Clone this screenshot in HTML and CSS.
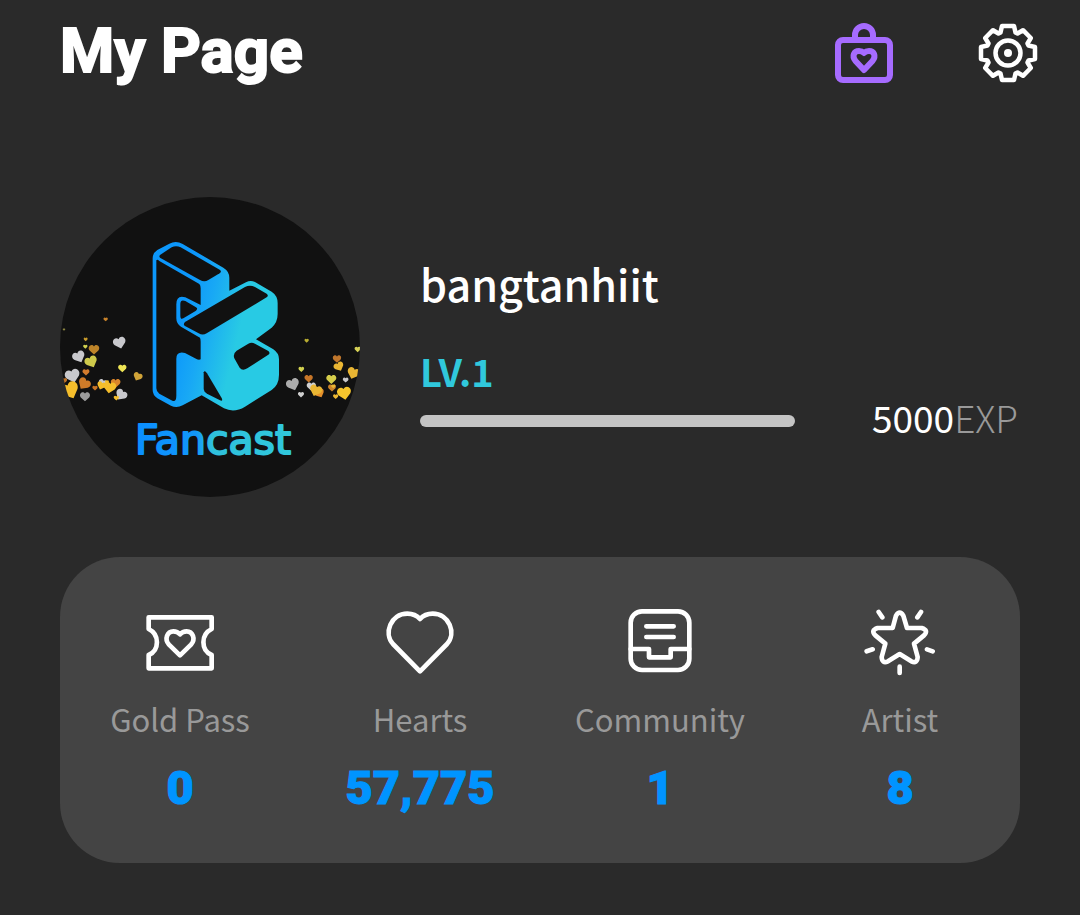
FILE: index.html
```html
<!DOCTYPE html>
<html lang="en">
<head>
<meta charset="utf-8">
<meta name="viewport" content="width=device-width, initial-scale=1">
<title>My Page</title>
<link rel="stylesheet" href="styles.css">
</head>
<body>
<header class="header">
  <h1 class="title">My Page</h1>
  <div class="actions">
    <button class="icon-button shop" type="button" aria-label="Shop">
      <svg viewBox="0 0 60 60" class="action-icon" stroke-width="6">
        <rect x="4" y="17" width="52" height="40" rx="5"/>
        <path d="M21 16V12a9 9 0 0 1 18 0V16"/>
        <path d="M30 47L21.500 38C17.500 33 20 28 25 28C27.500 28 29 29 30 30C31 29 32.500 28 35 28C40 28 42.500 33 38.500 38Z"/>
      </svg>
    </button>
    <button class="icon-button" type="button" aria-label="Settings">
      <svg viewBox="-30 -30 60 60" class="action-icon" stroke-width="4.500">
        <path d="M-6-27L6-27L7.500-20.500L9.500-19.500L15-22.800L22.800-15L19.500-9.500L20.500-7.500L27-6L27 6L20.500 7.500L19.500 9.500L22.800 15L15 22.800L9.500 19.500L7.500 20.500L6 27L-6 27L-7.500 20.500L-9.500 19.500L-15 22.800L-22.800 15L-19.500 9.500L-20.500 7.500L-27 6L-27-6L-20.500-7.500L-19.500-9.500L-22.800-15L-15-22.800L-9.500-19.500L-7.500-20.500Z"/>
        <circle r="12.500"/>
        <circle r="4" fill="currentColor" stroke="none"/>
      </svg>
    </button>
  </div>
</header>
<main class="content">
  <section class="profile">
    <svg class="avatar" viewBox="0 0 300 300" role="img" aria-label="Fancast">
      <defs>
        <linearGradient id="brand" gradientUnits="userSpaceOnUse" x1="180" y1="290" x2="385" y2="340">
          <stop offset="0" stop-color="#0c97fb"/>
          <stop offset=".35" stop-color="#18a8f5"/>
          <stop offset=".85" stop-color="#28cae4"/>
          <stop offset="1" stop-color="#28cae4"/>
        </linearGradient>
        <linearGradient id="word" gradientUnits="userSpaceOnUse" x1="76" y1="0" x2="233" y2="0">
          <stop offset="0" stop-color="#0a8fff"/>
          <stop offset=".38" stop-color="#1296fa"/>
          <stop offset=".48" stop-color="#2fc0dc"/>
          <stop offset="1" stop-color="#30c8dc"/>
        </linearGradient>
        <clipPath id="disc"><circle cx="150" cy="150" r="150"/></clipPath>
        <path id="h" d="M0 12L-11 2C-18-7-6-17 0-8C6-17 18-7 11 2Z"/>
      </defs>
      <circle cx="150" cy="150" r="150" fill="#111"/>
      <g clip-path="url(#disc)">
        <g transform="translate(-10 103) scale(.3333)">
          <g fill="#c8c8cc">
            <use href="#h" transform="translate(209 129) rotate(-15) scale(1.450)"/>
            <use href="#h" transform="translate(87 171) rotate(-25) scale(1.450)"/>
            <use href="#h" transform="translate(68 228) rotate(-15) scale(1.700)"/>
            <use href="#h" transform="translate(105 290) scale(1.150)" fill="#9c9c9c"/>
            <use href="#h" transform="translate(158 250) rotate(20)"/>
            <use href="#h" transform="translate(213 285) rotate(35) scale(1.350)"/>
          </g>
          <g fill="#f4bd2b">
            <use href="#h" transform="translate(167 58) scale(.500)" fill="#c9832b"/>
            <use href="#h" transform="translate(42 89) scale(.300)" fill="#8a8440"/>
            <use href="#h" transform="translate(107 118) scale(.450)" fill="#c99b2b"/>
            <use href="#h" transform="translate(106 140) scale(.500)" fill="#d2d150"/>
            <use href="#h" transform="translate(132 149) scale(1.200)" fill="#bd8429"/>
            <use href="#h" transform="translate(124 186) rotate(-25) scale(1.450)" fill="#cec94b"/>
            <use href="#h" transform="translate(217 205) scale(.950)" fill="#eee555"/>
            <use href="#h" transform="translate(263 230) rotate(25) scale(1.050)" fill="#d0a338"/>
            <use href="#h" transform="translate(108 217) scale(.800)" fill="#d27b2d"/>
            <use href="#h" transform="translate(102 252) rotate(35) scale(1.450)" fill="#ce7b29"/>
            <use href="#h" transform="translate(60 272) rotate(-25) scale(2.100)"/>
            <use href="#h" transform="translate(42 242) scale(.700)" fill="#bd7226"/>
            <use href="#h" transform="translate(135 264) scale(.600)" fill="#c87425"/>
            <use href="#h" transform="translate(154 257) rotate(20)"/>
            <use href="#h" transform="translate(197 250) scale(1.100)" fill="#d9852b"/>
            <use href="#h" transform="translate(179 263) rotate(10) scale(1.450)"/>
            <use href="#h" transform="translate(171 246) scale(.450)"/>
            <use href="#h" transform="translate(199 294) scale(.600)"/>
          </g>
        </g>
        <g transform="translate(210 103) scale(.3333)" fill="#eab633">
          <use href="#h" transform="translate(110 122) scale(.500)" fill="#b9ad31"/>
          <use href="#h" transform="translate(263 148) scale(.700)" fill="#d6d156"/>
          <use href="#h" transform="translate(201 177) scale(.950)" fill="#bf762c"/>
          <use href="#h" transform="translate(207 200) rotate(-25) scale(1.150)"/>
          <use href="#h" transform="translate(250 220) rotate(20) scale(1.450)"/>
          <use href="#h" transform="translate(94 208) scale(.650)" fill="#d2d150"/>
          <use href="#h" transform="translate(116 236) scale(.950)" fill="#c77628"/>
          <use href="#h" transform="translate(184 238) scale(1.150)" fill="#d5cd4a"/>
          <use href="#h" transform="translate(227 240) scale(.650)" fill="#c8c8cc"/>
          <use href="#h" transform="translate(69 254) rotate(-20) scale(1.500)" fill="#acacac"/>
          <use href="#h" transform="translate(93 284) scale(.700)" fill="#d0d0d0"/>
          <use href="#h" transform="translate(124 260) scale(1.050)" fill="#d0d0d0"/>
          <use href="#h" transform="translate(149 280) rotate(-25) scale(1.100)" fill="#e58f2b"/>
          <use href="#h" transform="translate(137 272) rotate(20) scale(1.400)"/>
          <use href="#h" transform="translate(186 264) scale(.900)" fill="#cb832b"/>
          <use href="#h" transform="translate(190 259) scale(.500)"/>
          <use href="#h" transform="translate(197 290) scale(.600)"/>
          <use href="#h" transform="translate(223 280) rotate(-10) scale(1.600)" fill="#f6c52d"/>
        </g>
        <g transform="translate(60 28) scale(.3333)">
          <path fill="url(#brand)" d="M98 100Q98 84 112 75L148 56Q168 46 188 57L310 128Q328 139 328 158V197L378 172Q391 165 405 171L455 200Q473 212 473 234V267Q473 292 455 308L408 343L460 373Q477 385 477 402V450Q477 480 455 495L375 545Q343 565 312 550L245 511L188 541Q170 550 153 542L112 520Q98 510 98 495Z"/>
          <g fill="#111">
            <path d="M120 90L155 67Q168 60 182 67L299 134Q306 139 299 145L265 165Q253 172 240 165L120 98Q116 94 120 90Z"/>
            <path d="M109 106Q112 102 118 108L238 177Q242 181 242 190V240L196 217Q169 209 169 238V280Q169 296 183 305L240 338Q242 342 242 350V403Q236 406 228 401L195 384Q169 378 169 401V512Q169 532 157 527L118 506Q109 500 109 490Z"/>
            <path d="M181 236Q182 222 196 228L228 247Q235 251 228 257L190 280Q181 285 181 272Z"/>
            <path d="M195 291L375 186Q390 178 405 186L440 206Q447 212 440 217L260 325Q248 332 236 325L195 303Q188 298 195 291Z"/>
            <path d="M350 377L385 356Q395 350 405 356L445 378Q452 384 445 389L382 430Q367 439 359 428L343 400Q338 386 350 377Z"/>
            <path d="M251 442Q254 434 261 445L305 519Q310 530 300 526L261 506Q251 500 251 490Z"/>
          </g>
        </g>
        <text class="wordmark" x="75" y="257" fill="url(#word)" stroke="url(#word)">Fancast</text>
      </g>
    </svg>
    <div class="details">
      <h2 class="username">bangtanhiit</h2>
      <label class="level" for="experience">LV.1</label>
      <div class="progress-row">
        <progress class="progress" id="experience" value="0" max="5000"></progress>
        <p class="exp">5000<span class="unit">EXP</span></p>
      </div>
    </div>
  </section>
  <ul class="stats">
    <li class="stat">
      <svg class="stat-icon" viewBox="42 33 216 216" aria-hidden="true">
        <path d="M56 67H245V102C212 118 212 166 245 180V220H56V180C89 166 89 118 56 102Z"/>
        <path d="M150 181L117 149C102 132 112 109 130 109C140 109 145 112 150 118C155 112 160 109 170 109C188 109 198 132 183 149Z"/>
      </svg>
      <span class="label">Gold Pass</span>
      <strong class="value">0</strong>
    </li>
    <li class="stat">
      <svg class="stat-icon" viewBox="42 33 216 216" aria-hidden="true">
        <path d="M150 229L69 147C40 115 62 56 112 56C128 56 141 62 150 72C159 62 172 56 188 56C238 56 260 115 231 147Z"/>
      </svg>
      <span class="label">Hearts</span>
      <strong class="value">57,775</strong>
    </li>
    <li class="stat">
      <svg class="stat-icon" viewBox="42 33 216 216" aria-hidden="true">
        <rect x="62" y="49" width="176" height="176" rx="34"/>
        <path d="M109 94H191M109 126H191M62 162H117V187H182V162H238"/>
      </svg>
      <span class="label">Community</span>
      <strong class="value">1</strong>
    </li>
    <li class="stat">
      <svg class="stat-icon" viewBox="42 33 216 216" aria-hidden="true">
        <path d="M128 99L138 62Q149 44 160 62L171 99H215Q237 106 222 121L192 146L203 186Q202 207 184 199L149 177L114 199Q96 207 95 186L106 146L76 121Q61 106 83 99Z"/>
        <path d="M86 51L97 67M213 51L202 67M50 169L68 163M248 169L231 163M149 215V234"/>
      </svg>
      <span class="label">Artist</span>
      <strong class="value">8</strong>
    </li>
  </ul>
</main>
</body>
</html>
```
FILE: styles.css
```css
* {
  box-sizing: border-box;
}

body {
  margin: 0;
  background: #2a2a2a;
  color: #fff;
  font-family: "Noto Sans CJK KR", "Noto Sans", sans-serif;
}

h1,
h2,
p,
ul {
  margin: 0;
  padding: 0;
}

.header {
  display: flex;
  align-items: center;
  justify-content: space-between;
  padding: 5px 42px 0 60px;
}

.title {
  font-family: Roboto, sans-serif;
  font-size: 62px;
  font-weight: 700;
  line-height: 92px;
  padding-bottom: 4px;
  -webkit-text-stroke: 2px currentColor;
}

.actions {
  display: flex;
  gap: 84px;
}

.icon-button {
  display: flex;
  padding: 0;
  border: 0;
  background: none;
  color: #fff;
  cursor: pointer;
}

.shop {
  color: #a66bff;
}

.action-icon {
  width: 60px;
  height: 60px;
  fill: none;
  stroke: currentColor;
  stroke-linejoin: round;
}

.content {
  padding: 96px 60px 52px;
}

.profile {
  display: flex;
  align-items: center;
  gap: 60px;
}

.avatar {
  flex: none;
  width: 300px;
  height: 300px;
}

.wordmark {
  font-family: "DejaVu Sans", sans-serif;
  font-size: 41px;
  stroke-width: 2px;
  stroke-linejoin: round;
}

.details {
  flex: 1;
}

.username {
  font-size: 43px;
  font-weight: 500;
  line-height: 68px;
}

.level {
  display: block;
  margin-top: 28px;
  color: #30c8dc;
  font-size: 38px;
  font-weight: 700;
  line-height: 52px;
}

.progress-row {
  display: flex;
  align-items: center;
  justify-content: space-between;
  gap: 60px;
  padding-right: 2px;
}

.progress {
  flex: 1;
  max-width: 375px;
  height: 12px;
  border: 0;
  border-radius: 6px;
  background: #c4c4c4;
  overflow: hidden;
  appearance: none;
}

.progress::-webkit-progress-bar {
  background: #c4c4c4;
}

.progress::-webkit-progress-value {
  background: #30c8dc;
}

.exp {
  padding-bottom: 8px;
  font-size: 37px;
  line-height: 40px;
}

.unit {
  color: #999;
  font-weight: 300;
}

.stats {
  display: grid;
  grid-template-columns: repeat(4, 1fr);
  margin-top: 60px;
  padding: 49px 0 39px;
  border-radius: 60px;
  background: #444;
  list-style: none;
}

.stat {
  display: flex;
  flex-direction: column;
  align-items: center;
}

.stat-icon {
  width: 72px;
  height: 72px;
  fill: none;
  stroke: #fff;
  stroke-width: 14;
  stroke-linecap: round;
  stroke-linejoin: round;
}

.label {
  margin-top: 16px;
  color: #999;
  font-size: 31px;
  line-height: 50px;
}

.value {
  margin-top: 8px;
  color: #0094ff;
  font-family: Roboto, sans-serif;
  font-size: 47px;
  font-weight: 900;
  line-height: 72px;
  -webkit-text-stroke: 1px currentColor;
}
```
